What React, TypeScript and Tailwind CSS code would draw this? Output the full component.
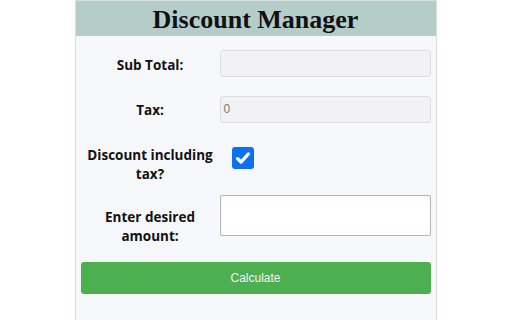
export default function App() {
  return (
    <div className="flex h-[320px] w-[512px] justify-center bg-white">
      <div className="ml-[-1px] flex w-[362px] flex-col border-x border-t border-[#dcdcdc] bg-[#f7f8fc]">
        <div className="flex h-[35px] items-center justify-center bg-[#b5cdc8] pt-[3px]">
          <h1 className="font-['Liberation_Serif',serif] text-[26px] font-bold leading-none text-[#111]">
            Discount Manager
          </h1>
        </div>

        <div className="flex flex-col px-[5px] font-['Open_Sans',sans-serif] text-[13.5px] font-bold leading-[19px] text-[#111]">
          <div className="mt-[14px] flex">
            <div className="w-[139px] pt-[6px] text-center">Sub Total:</div>
            <div className="h-[27px] w-[211px] rounded-[3px] border border-[#dddddd] bg-[#f2f2f4]" />
          </div>

          <div className="mt-[19px] flex">
            <div className="w-[139px] pt-[5px] text-center">Tax:</div>
            <div className="flex h-[27px] w-[211px] items-center rounded-[3px] border border-[#dddddd] bg-[#f2f2f4] pl-[3px] font-['Liberation_Sans',sans-serif] text-[12px] font-normal text-[#777]">
              0
            </div>
          </div>

          <div className="mt-[23px] flex">
            <div className="w-[139px] px-[4px] text-center">Discount including tax?</div>
            <div className="ml-[12px] mt-[1px] flex h-[22px] w-[22px] items-center justify-center rounded-[3px] bg-[#0f6ff3]">
              <svg viewBox="0 0 16 16" className="h-[18px] w-[18px]" fill="none">
                <path
                  d="M3.2 8.6l3 3L12.8 4.4"
                  stroke="white"
                  strokeWidth="3"
                  strokeLinecap="round"
                  strokeLinejoin="round"
                />
              </svg>
            </div>
          </div>

          <div className="mt-[11px] flex">
            <div className="w-[139px] px-[8px] pt-[13px] text-center">Enter desired amount:</div>
            <div className="h-[41px] w-[211px] rounded-[2px] border border-[#b4b4b4] bg-white" />
          </div>

          <button className="mt-[16px] h-[32px] w-full rounded-[3px] bg-[#4caf50] font-['Liberation_Sans',sans-serif] text-[12px] font-normal text-[#f4f4f4]">
            Calculate
          </button>
        </div>
      </div>
    </div>
  );
}
